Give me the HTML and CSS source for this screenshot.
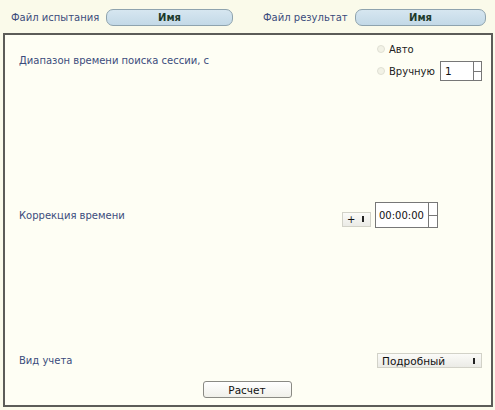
FILE: index.html
```html
<!DOCTYPE html>
<html lang="ru">
<head>
<meta charset="utf-8">
<title>Расчет</title>
<link rel="stylesheet" href="styles.css">
</head>
<body>
<div class="topbar">
  <span class="toplabel first">Файл испытания</span>
  <span class="pill pill-a">Имя</span>
  <span class="toplabel second">Файл результат</span>
  <span class="pill pill-b">Имя</span>
</div>
<div class="panel">
  <div class="row row-range">
    <span class="label">Диапазон времени поиска сессии, с</span>
    <div class="radios">
      <div class="radio-line"><span class="radio"></span><span class="rtext">Авто</span></div>
      <div class="radio-line"><span class="radio"></span><span class="rtext">Вручную</span>
        <span class="numbox"><span class="numval">1</span><span class="spin"><span></span><span></span></span></span>
      </div>
    </div>
  </div>
  <div class="row row-corr">
    <span class="label">Коррекция времени</span>
    <span class="select sign"><span class="seltext">+</span><span class="arrow"></span></span>
    <div class="maincol">
      <span class="timebox"><span class="timeval">00:00:00</span><span class="spin"><span></span><span></span></span></span>
    </div>
  </div>
  <div class="row row-kind">
    <span class="label">Вид учета</span>
    <span class="select kind"><span class="seltext">Подробный</span><span class="arrow"></span></span>
  </div>
  <div class="btnrow">
    <span class="button">Расчет</span>
  </div>
</div>
</body>
</html>
```
FILE: styles.css
```css
html, body {
  margin: 0;
  padding: 0;
}
body {
  width: 495px;
  height: 410px;
  background: #fafaea;
  font-family: "DejaVu Sans", Verdana, sans-serif;
  font-size: 10px;
  color: #3b4c7c;
  overflow: hidden;
}
.topbar {
  height: 33px;
  display: flex;
  align-items: center;
  box-sizing: border-box;
  padding-top: 1px;
}
.toplabel {
  color: #3b4c7c;
}
.toplabel.first {
  margin-left: 11px;
  width: 95px;
}
.toplabel.second {
  margin-left: 30px;
  width: 92px;
}
.pill {
  height: 17px;
  box-sizing: border-box;
  border: 1px solid #8ea3ae;
  border-radius: 7px;
  background: linear-gradient(#d6e6f0, #c3d9e7);
  color: #1d3a2a;
  font-weight: bold;
  display: flex;
  align-items: center;
  justify-content: center;
  font-size: 10px;
}
.pill-a { width: 127px; }
.pill-b { width: 131px; }

.panel {
  margin-left: 3px;
  width: 490px;
  height: 374px;
  box-sizing: border-box;
  border: 2px solid #5c5c58;
  background: #fefef4;
  padding: 0 9px 0 14px;
  display: flex;
  flex-direction: column;
}
.row {
  display: flex;
  align-items: center;
}
.label {
  flex: 1;
}
.row-range {
  height: 50px;
}
.radios {
  width: 106px;
  margin-left: -1px;
  display: flex;
  flex-direction: column;
  gap: 2px;
  color: #222;
}
.radio-line {
  height: 20px;
  display: flex;
  align-items: center;
}
.radio {
  width: 6px;
  height: 6px;
  border-radius: 50%;
  border: 1px solid #e0e0d4;
  background: #f2f2e6;
  margin-left: 1px;
  margin-right: 4px;
}
.rtext {
  color: #222;
  font-size: 10px;
}
.numbox {
  margin-left: 5px;
  width: 42px;
  height: 20px;
  box-sizing: border-box;
  border: 1px solid #777;
  background: #fff;
  display: flex;
  align-items: center;
  color: #111;
}
.numval {
  flex: 1;
  padding-left: 4px;
  font-size: 10.5px;
}
.spin {
  width: 8px;
  height: 100%;
  box-sizing: border-box;
  border-left: 1px solid #777;
  display: flex;
  flex-direction: column;
}
.spin span {
  flex: 1;
}
.spin span:first-child {
  border-bottom: 1px solid #777;
}
.row-corr {
  margin-top: 117px;
  height: 26px;
}
.maincol {
  width: 107px;
  display: flex;
}
.select {
  height: 15px;
  box-sizing: border-box;
  border: 1px solid #d2d2c8;
  background: linear-gradient(#fbfbf8, #ebebe6);
  display: flex;
  align-items: center;
  color: #111;
  padding-left: 4px;
  padding-right: 6px;
}
.seltext {
  flex: 1;
}
.arrow {
  width: 2px;
  height: 6px;
  background: #222;
}
.sign {
  width: 29px;
  margin-right: 4px;
  margin-top: 8px;
}
.timebox {
  width: 63px;
  height: 26px;
  box-sizing: border-box;
  border: 1px solid #777;
  background: #fff;
  display: flex;
  align-items: center;
  color: #111;
}
.timeval {
  flex: 1;
  padding-left: 3px;
  font-size: 10px;
}
.timebox .spin {
  width: 9px;
}
.row-kind {
  margin-top: 125px;
  height: 15px;
}
.kind {
  width: 105px;
  margin-left: 1px;
  font-size: 10.5px;
}
.btnrow {
  margin-top: 13px;
  display: flex;
  justify-content: center;
}
.button {
  width: 89px;
  height: 17px;
  box-sizing: border-box;
  border: 1px solid #8a8a84;
  border-radius: 3px;
  background: linear-gradient(#ffffff, #f0f0ea);
  color: #111;
  font-size: 10.5px;
  display: flex;
  align-items: center;
  justify-content: center;
  margin-left: -7px;
}
```
